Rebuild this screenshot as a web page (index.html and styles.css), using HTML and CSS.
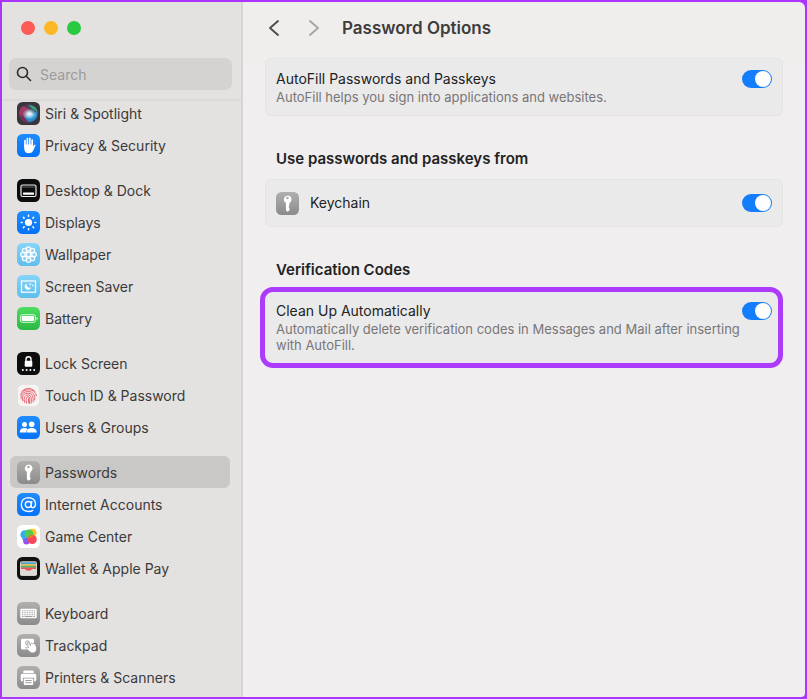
FILE: index.html
```html
<!DOCTYPE html>
<html lang="en">
<head>
<meta charset="utf-8">
<meta name="viewport" content="width=device-width, initial-scale=1">
<title>Password Options</title>
<link rel="stylesheet" href="styles.css">
</head>
<body>
<svg class="defs" aria-hidden="true">
  <defs>
    <linearGradient id="gray" x1="0" y1="0" x2="0" y2="1"><stop offset="0" stop-color="#b0afae"/><stop offset="1" stop-color="#8c8b8b"/></linearGradient>
    <linearGradient id="blue" x1="0" y1="0" x2="0" y2="1"><stop offset="0" stop-color="#1f8cff"/><stop offset="1" stop-color="#0573f7"/></linearGradient>
    <linearGradient id="sky" x1="0" y1="0" x2="0" y2="1"><stop offset="0" stop-color="#86d4f8"/><stop offset="1" stop-color="#5fbeec"/></linearGradient>
    <linearGradient id="green" x1="0" y1="0" x2="0" y2="1"><stop offset="0" stop-color="#4fdc62"/><stop offset="1" stop-color="#2bb944"/></linearGradient>
    <linearGradient id="siri" x1="0" y1="0" x2="1" y2="1"><stop offset="0" stop-color="#4a2440"/><stop offset=".5" stop-color="#46506a"/><stop offset="1" stop-color="#1f4a63"/></linearGradient>
    <radialGradient id="glow"><stop offset="0" stop-color="#fff"/><stop offset=".35" stop-color="#d8f0ff" stop-opacity=".85"/><stop offset="1" stop-color="#8ed" stop-opacity="0"/></radialGradient>
    <clipPath id="orb"><circle cx="11.500" cy="11.500" r="9.500"/></clipPath>
    <symbol id="key" viewBox="0 0 23 23">
      <path fill="#fff" fill-rule="evenodd" d="M11.500 3.400a4 4 0 0 1 2 7.450v1.600l-.9.900.9 1-.9 1.100.9 1v1.700l-2 1.700-1.600-1.600v-7.400a4 4 0 0 1 1.600-7.450zm0 1.400a1.200 1.200 0 1 0 0 2.400 1.200 1.200 0 0 0 0-2.400z"/>
    </symbol>
  </defs>
</svg>
<div class="window">
  <aside class="sidebar">
    <div class="side-head">
      <div class="lights">
        <button class="light red" aria-label="Close"></button>
        <button class="light yellow" aria-label="Minimize"></button>
        <button class="light green" aria-label="Zoom"></button>
      </div>
      <label class="search">
        <svg width="16" height="16" viewBox="0 0 16 16" fill="none" stroke="#2b2b2b" stroke-width="1.600" stroke-linecap="round"><circle cx="6.500" cy="6.500" r="5"/><path d="M10.300 10.300l4.200 4.200"/></svg>
        <input type="search" placeholder="Search" aria-label="Search">
      </label>
    </div>
    <nav class="list">
      <div class="group">
        <a class="item" href="#"><svg class="icon" viewBox="0 0 23 23"><rect width="23" height="23" rx="5.500" fill="#38363b"/><circle cx="11.500" cy="11.500" r="9.700" fill="url(#siri)"/><g clip-path="url(#orb)"><path d="M2 5q7-3 12 5l-4 5q-5 3-8-2z" fill="#b93a68" opacity=".8"/><path d="M11 3q8 0 10 7-6-3-10-7z" fill="#36a779"/><path d="M7 14q7 0 13-5 2 9-7 11-5-1-6-6z" fill="#2b8ccc"/><path d="M3 12q5 3 9 9-7 0-9-9z" fill="#83294c"/></g><ellipse cx="12.500" cy="12" rx="7" ry="5.500" fill="url(#glow)"/></svg>Siri &amp; Spotlight</a>
        <a class="item" href="#"><svg class="icon" viewBox="0 0 23 23"><rect width="23" height="23" rx="5.500" fill="url(#blue)"/><path d="M8 12V6.500M10.400 11V4.500M12.800 11V4.300M15.200 12V6" stroke="#fff" stroke-width="1.700" stroke-linecap="round"/><path d="M7.150 10.500h8.900v2l1.200-1.600q1-.7 1.300.3l-2.200 5q-1.300 3-4.400 3-4.800 0-4.800-5z" fill="#fff"/></svg>Privacy &amp; Security</a>
      </div>
      <div class="group">
        <a class="item" href="#"><svg class="icon" viewBox="0 0 23 23"><rect width="23" height="23" rx="5.500" fill="#0c0c0c"/><rect x="4" y="6" width="15" height="11.500" rx="1.500" fill="none" stroke="#eee" stroke-width="1.200"/><path d="M4.500 8h14" stroke="#777" stroke-width=".8"/><rect x="6" y="13.500" width="11" height="2.300" rx=".5" fill="#fff"/></svg>Desktop &amp; Dock</a>
        <a class="item" href="#"><svg class="icon" viewBox="0 0 23 23"><rect width="23" height="23" rx="5.500" fill="url(#blue)"/><circle cx="11.500" cy="11.500" r="3.600" fill="#fff"/><g stroke="#fff" stroke-width="1.500" stroke-linecap="round"><path d="M11.500 4.200v1M11.500 17.800v1M4.200 11.500h1M17.800 11.500h1M6.400 6.400l.7.700M15.900 15.900l.7.700M6.400 16.600l.7-.7M15.900 7.100l.7-.7"/></g></svg>Displays</a>
        <a class="item" href="#"><svg class="icon" viewBox="0 0 23 23"><rect width="23" height="23" rx="5.500" fill="url(#sky)"/><g fill="#fff" fill-opacity=".2" stroke="#fff" stroke-width="1.100"><circle cx="11.500" cy="6" r="2.300"/><circle cx="15.400" cy="7.600" r="2.300"/><circle cx="17" cy="11.500" r="2.300"/><circle cx="15.400" cy="15.400" r="2.300"/><circle cx="11.500" cy="17" r="2.300"/><circle cx="7.600" cy="15.400" r="2.300"/><circle cx="6" cy="11.500" r="2.300"/><circle cx="7.600" cy="7.600" r="2.300"/><circle cx="11.500" cy="11.500" r="2.300"/></g></svg>Wallpaper</a>
        <a class="item" href="#"><svg class="icon" viewBox="0 0 23 23"><rect width="23" height="23" rx="5.500" fill="url(#sky)"/><rect x="4.500" y="6" width="14" height="11.200" fill="none" stroke="#fff" stroke-width="1.200"/><path d="M9.700 8.400a3.300 3.300 0 1 0 4.400 4.100 3.300 3.300 0 0 1-4.400-4.100z" fill="#fff"/><path d="M13.200 8.200v2M12.200 9.200h2M15.800 9.700v1.600M15 10.500h1.600" stroke="#fff" stroke-width=".7"/></svg>Screen Saver</a>
        <a class="item" href="#"><svg class="icon" viewBox="0 0 23 23"><rect width="23" height="23" rx="5.500" fill="url(#green)"/><rect x="3.400" y="7.700" width="15" height="7.600" rx="2.200" fill="none" stroke="#e4ffe8" stroke-width=".9"/><rect x="4.700" y="9" width="12.400" height="5" rx="1.200" fill="#fff"/><path d="M19.600 10v3q1-.5 1-1.500t-1-1.500z" fill="#fff"/></svg>Battery</a>
      </div>
      <div class="group">
        <a class="item" href="#"><svg class="icon" viewBox="0 0 23 23"><rect width="23" height="23" rx="5.500" fill="#0c0c0c"/><path d="M9 9.500V7.200a2.500 2.500 0 0 1 5 0v2.300" fill="none" stroke="#fff" stroke-width="1.400"/><rect x="7.700" y="8.800" width="7.600" height="5.900" rx="1" fill="#fff"/><g fill="#fff"><circle cx="5.800" cy="18" r="1"/><circle cx="9.600" cy="18" r="1"/><circle cx="13.400" cy="18" r="1"/><circle cx="17.200" cy="18" r="1"/></g></svg>Lock Screen</a>
        <a class="item" href="#"><svg class="icon" viewBox="0 0 23 23"><rect x=".3" y=".3" width="22.400" height="22.400" rx="5.500" fill="#f6f4f3" stroke="#dad8d7" stroke-width=".6"/><g fill="none" stroke="#e96570" stroke-width="1" stroke-linecap="round"><path d="M5 7.200q6.500-6 13 0M3.700 10.800q1-5 7.800-5 7 0 7.900 6M4 14.200q-.5-6.500 7.500-6.700 7 .2 6.400 8.500M5.700 16.900q-2-7.500 5.800-7.700 5.500.2 4.700 8.700M7.500 18.400q-2-7.300 4-7.500 3.800.3 2.700 8.200M9.500 19.300q-1.500-6.500 2-6.700 2.100.2.800 7M11.500 14.500v4"/></g></svg>Touch ID &amp; Password</a>
        <a class="item" href="#"><svg class="icon" viewBox="0 0 23 23"><rect width="23" height="23" rx="5.500" fill="url(#blue)"/><g fill="#fff"><circle cx="7.500" cy="8.600" r="2.500"/><path d="M2.800 16.400q0-4.400 4.700-4.400 2.100 0 3.300 1.200-1.700 1.300-1.600 3.200z"/><circle cx="14.700" cy="8.200" r="2.800"/><path d="M9.700 16.600q0-4.700 5-4.700t5.200 4.700z"/></g></svg>Users &amp; Groups</a>
      </div>
      <div class="group">
        <a class="item selected" href="#" aria-current="page"><svg class="icon" viewBox="0 0 23 23"><rect width="23" height="23" rx="5.500" fill="url(#gray)"/><use href="#key"/></svg>Passwords</a>
        <a class="item" href="#"><svg class="icon" viewBox="0 0 23 23"><rect width="23" height="23" rx="5.500" fill="url(#blue)"/><g fill="none" stroke="#fff" stroke-width="1.300" stroke-linecap="round"><circle cx="11.300" cy="11.500" r="3"/><path d="M14.800 8.300l-.6 4.500q0 2 1.700 1.900 2.700-.6 2.600-3.800-.5-6.200-7-6.300-7 .4-7.200 7 .3 6.600 7.200 6.900 2.500 0 4.300-1.100"/></g></svg>Internet Accounts</a>
        <a class="item" href="#"><svg class="icon" viewBox="0 0 23 23"><rect width="23" height="23" rx="5.500" fill="#fff"/><circle cx="15.500" cy="7.800" r="4" fill="#ffc421"/><circle cx="7.800" cy="9.600" r="4.400" fill="#2caef4"/><circle cx="12" cy="8.900" r="4.500" fill="#56c84d"/><circle cx="9.500" cy="16.200" r="3.300" fill="#a847ef"/><path d="M5 13q3 2 6 .5l-1 3.500q-4 0-5-4z" fill="#5d71ed"/><circle cx="15.300" cy="14.500" r="4.500" fill="#fb4656"/><path d="M11.500 12.500q2-2.600 5-2.300-1.500 3.400-5 2.300z" fill="#e28a32"/></svg>Game Center</a>
        <a class="item" href="#"><svg class="icon" viewBox="0 0 23 23"><rect width="23" height="23" rx="5.500" fill="#111"/><rect x="3" y="4.300" width="17" height="14.400" rx="2" fill="#d9d7d2"/><path d="M4 5.300h15v2H4z" fill="#4da0cd"/><path d="M4 7.300h15v2H4z" fill="#f3bf43"/><path d="M4 8.800h15v2H4z" fill="#49b765"/><path d="M4 10.600h15v2.200h-4q-1 1.800-3.500 1.800T8 12.800H4z" fill="#ef5361"/><path d="M3 12h4.500q1.500 1.700 4 1.700t4-1.700H20v4.700q0 2-2 2H5q-2 0-2-2z" fill="#dedbd7"/></svg>Wallet &amp; Apple Pay</a>
      </div>
      <div class="group">
        <a class="item" href="#"><svg class="icon" viewBox="0 0 23 23"><rect width="23" height="23" rx="5.500" fill="url(#gray)"/><rect x="3.300" y="6.700" width="16.400" height="9.600" rx="1.300" fill="#fff"/><g stroke="#989797" stroke-width="1"><path d="M5 8.800h13M5 10.800h13M5 12.800h13" stroke-dasharray="1 .7"/><path d="M5 14.600h1.600M7.500 14.600h8M16.400 14.600H18"/></g></svg>Keyboard</a>
        <a class="item" href="#"><svg class="icon" viewBox="0 0 23 23"><rect width="23" height="23" rx="5.500" fill="url(#gray)"/><rect x="4" y="4.800" width="13" height="10.600" rx="1.300" fill="#fff"/><circle cx="10.500" cy="8.800" r="2" fill="none" stroke="#999" stroke-width=".8"/><path d="M10 8.500q1-1 1.800.2l1.700 3 .2-2.200q1-.8 1.600.2l.7-.3q1-.2 1.300.6 1.100-.3 1.400.8 1.300 3.300.8 5.200-.6 2.700-3.400 2.900-2.100.1-3.700-1.500L8.700 14q.3-1.500 2-.8l1 .5z" fill="#fff" stroke="#969595" stroke-width=".7"/></svg>Trackpad</a>
        <a class="item" href="#"><svg class="icon" viewBox="0 0 23 23"><rect width="23" height="23" rx="5.500" fill="url(#gray)"/><path d="M6.300 7V5.500q0-1 1-1h8.400q1 0 1 1V7zM5.500 7.700h12q1.800 0 1.800 1.800v4.300q0 1.600-1.700 1.600h-.5v-3.600H5.900v3.600h-.5q-1.700 0-1.700-1.600V9.500q0-1.800 1.800-1.800z" fill="#fff"/><rect x="6.800" y="12.500" width="9.400" height="6.500" rx=".8" fill="#fff"/><path d="M8.300 14.500h6.400M8.300 16.700h6.400" stroke="#929191" stroke-width=".9"/></svg>Printers &amp; Scanners</a>
      </div>
    </nav>
  </aside>
  <main class="content">
    <header class="toolbar">
      <button class="nav" aria-label="Back"><svg width="12" height="18" viewBox="0 0 12 18"><path d="M10 2L2 9l8 7"/></svg></button>
      <button class="nav off" aria-label="Forward"><svg width="12" height="18" viewBox="0 0 12 18"><path d="M2 2l8 7-8 7"/></svg></button>
      <h1>Password Options</h1>
    </header>
    <section class="card">
      <div class="text"><label for="autofill">AutoFill Passwords and Passkeys</label><p>AutoFill helps you sign into applications and websites.</p></div>
      <input class="switch" id="autofill" type="checkbox" role="switch" checked>
    </section>
    <h2>Use passwords and passkeys from</h2>
    <section class="card keychain">
      <svg class="icon" viewBox="0 0 23 23"><rect width="23" height="23" rx="5.500" fill="url(#gray)"/><use href="#key"/></svg>
      <div class="text"><label for="keychain">Keychain</label></div>
      <input class="switch" id="keychain" type="checkbox" role="switch" checked>
    </section>
    <h2>Verification Codes</h2>
    <section class="card highlight">
      <div class="text"><label for="cleanup">Clean Up Automatically</label><p>Automatically delete verification codes in Messages and Mail after inserting with AutoFill.</p></div>
      <input class="switch" id="cleanup" type="checkbox" role="switch" checked>
    </section>
  </main>
</div>
</body>
</html>
```
FILE: styles.css
```css
* { box-sizing: border-box; }
body {
  margin: 0;
  min-height: 100vh;
  display: flex;
  padding-bottom: 1px;
  background: #f4eafa;
  font-family: Inter, "Liberation Sans", sans-serif;
  font-size: 14px;
  line-height: 20px;
  color: #222;
}
.defs { position: absolute; width: 0; height: 0; }
button { border: 0; padding: 0; background: none; }
h1, h2, p { margin: 0; }
.window {
  flex: 1;
  display: flex;
  border: 2px solid #ac35fb;
  background: #ac35fb;
}
.sidebar {
  flex: none;
  width: 241px;
  background: #e3e2e1;
  border-right: 2px solid #d7d5d5;
}
.side-head {
  height: 99px;
  padding: 19px 9px 0 7px;
  border-bottom: 2px solid #dbdad9;
}
.lights { display: flex; gap: 9px; padding-left: 12px; }
.light { width: 14px; height: 14px; border-radius: 50%; }
.red { background: #fc5b58; }
.yellow { background: #fcb827; }
.green { background: #29c940; }
.search {
  display: flex;
  align-items: center;
  gap: 8px;
  height: 32px;
  margin-top: 23px;
  padding: 0 7px;
  border-radius: 7px;
  background: #d4d3d2;
}
.search input {
  flex: 1;
  min-width: 0;
  border: 0;
  padding: 1px 0 0;
  outline: 0;
  background: none;
  font: inherit;
}
.search input::placeholder { color: #9c9b9a; opacity: 1; }
.list { padding: 0 11px 0 8px; margin-top: -4px; }
.group + .group { margin-top: 13px; }
.item {
  display: flex;
  align-items: center;
  gap: 5px;
  height: 32px;
  padding: 1px 7px 0;
  border-radius: 6px;
  color: #3b3a3a;
  text-decoration: none;
  white-space: nowrap;
}
.selected { background: #cac8c7; }
.icon { flex: none; width: 23px; height: 23px; }
.content {
  flex: 1;
  min-width: 0;
  padding: 0 22px;
  background: linear-gradient(#f0eeec 61px, #f0eeef 61px);
  border-radius: 0 6px 4px 0;
}
.toolbar { display: flex; align-items: center; height: 56px; padding: 0 3px 4px; }
.nav { width: 12px; height: 18px; margin-right: 28px; }
.nav svg { display: block; fill: none; stroke: #4a4948; stroke-width: 1.8; stroke-linecap: round; stroke-linejoin: round; }
.off svg { stroke: #a5a4a3; }
.off { margin-right: 22px; }
h1 { font-size: 17px; font-weight: 600; color: #3e3d3c; }
h2 { font-size: 15px; font-weight: 600; margin: 33px 0 10px 11px; }
.card {
  display: flex;
  align-items: flex-start;
  padding: 10px;
  border: 1px solid #e5e3e4;
  border-radius: 6px;
  background: #ebeaeb;
  min-height: 58px;
}
.text { flex: 1; }
.text label { display: block; }
.text p { font-size: 13px; line-height: 16px; color: #777677; }
.keychain { align-items: center; gap: 11px; min-height: 48px; }
.highlight {
  margin: -3px 0 0 -5px;
  min-height: 81px;
  padding: 9px 6px 9px 11px;
  border: 5px solid #ac3bfc;
  border-radius: 13px;
}
.switch {
  appearance: none;
  flex: none;
  width: 30px;
  height: 18px;
  margin: 1px 0;
  padding: 1px;
  border-radius: 9px;
  background: #aaa;
}
.switch:checked { background: #137dfb; }
.switch::before {
  content: "";
  display: block;
  width: 16px;
  height: 16px;
  border-radius: 50%;
  background: #fff;
}
.switch:checked::before { margin-left: auto; }
```
